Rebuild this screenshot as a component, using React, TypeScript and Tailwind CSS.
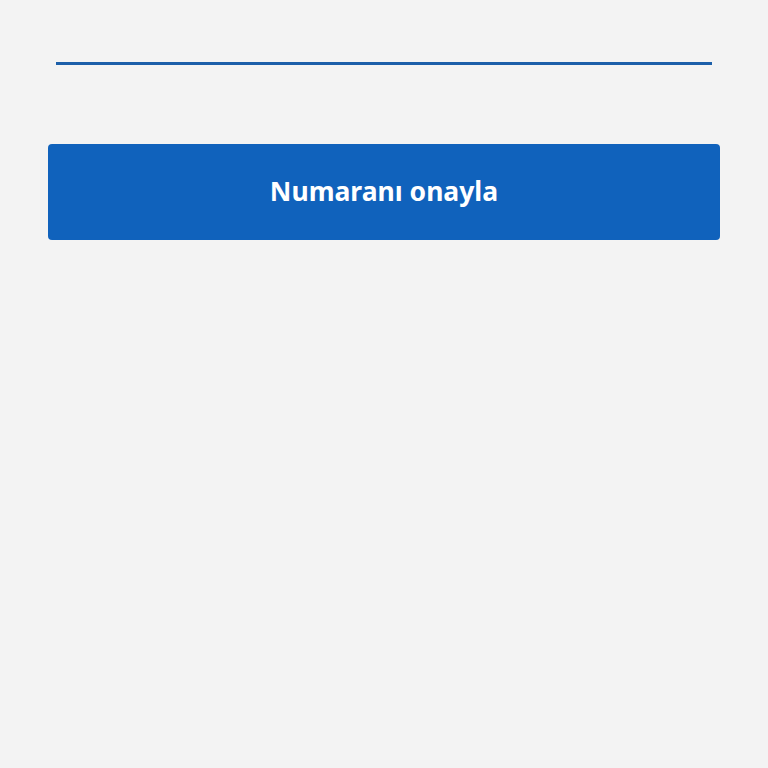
export default function App() {
  return (
    <div className="min-h-[768px] w-full bg-[#f3f3f3]" style={{ fontFamily: '"Noto Sans", Inter, sans-serif' }}>
      <div className="px-[56px] pt-[62px]">
        <div className="h-[3px] w-full bg-[#1c5fa9]" />
      </div>
      <div className="px-[48px] pt-[79px]">
        <button className="flex h-[96px] w-full items-center justify-center rounded-[4px] bg-[#1062bc] text-[26.5px] font-bold text-white">
          Numaranı onayla
        </button>
      </div>
    </div>
  );
}
